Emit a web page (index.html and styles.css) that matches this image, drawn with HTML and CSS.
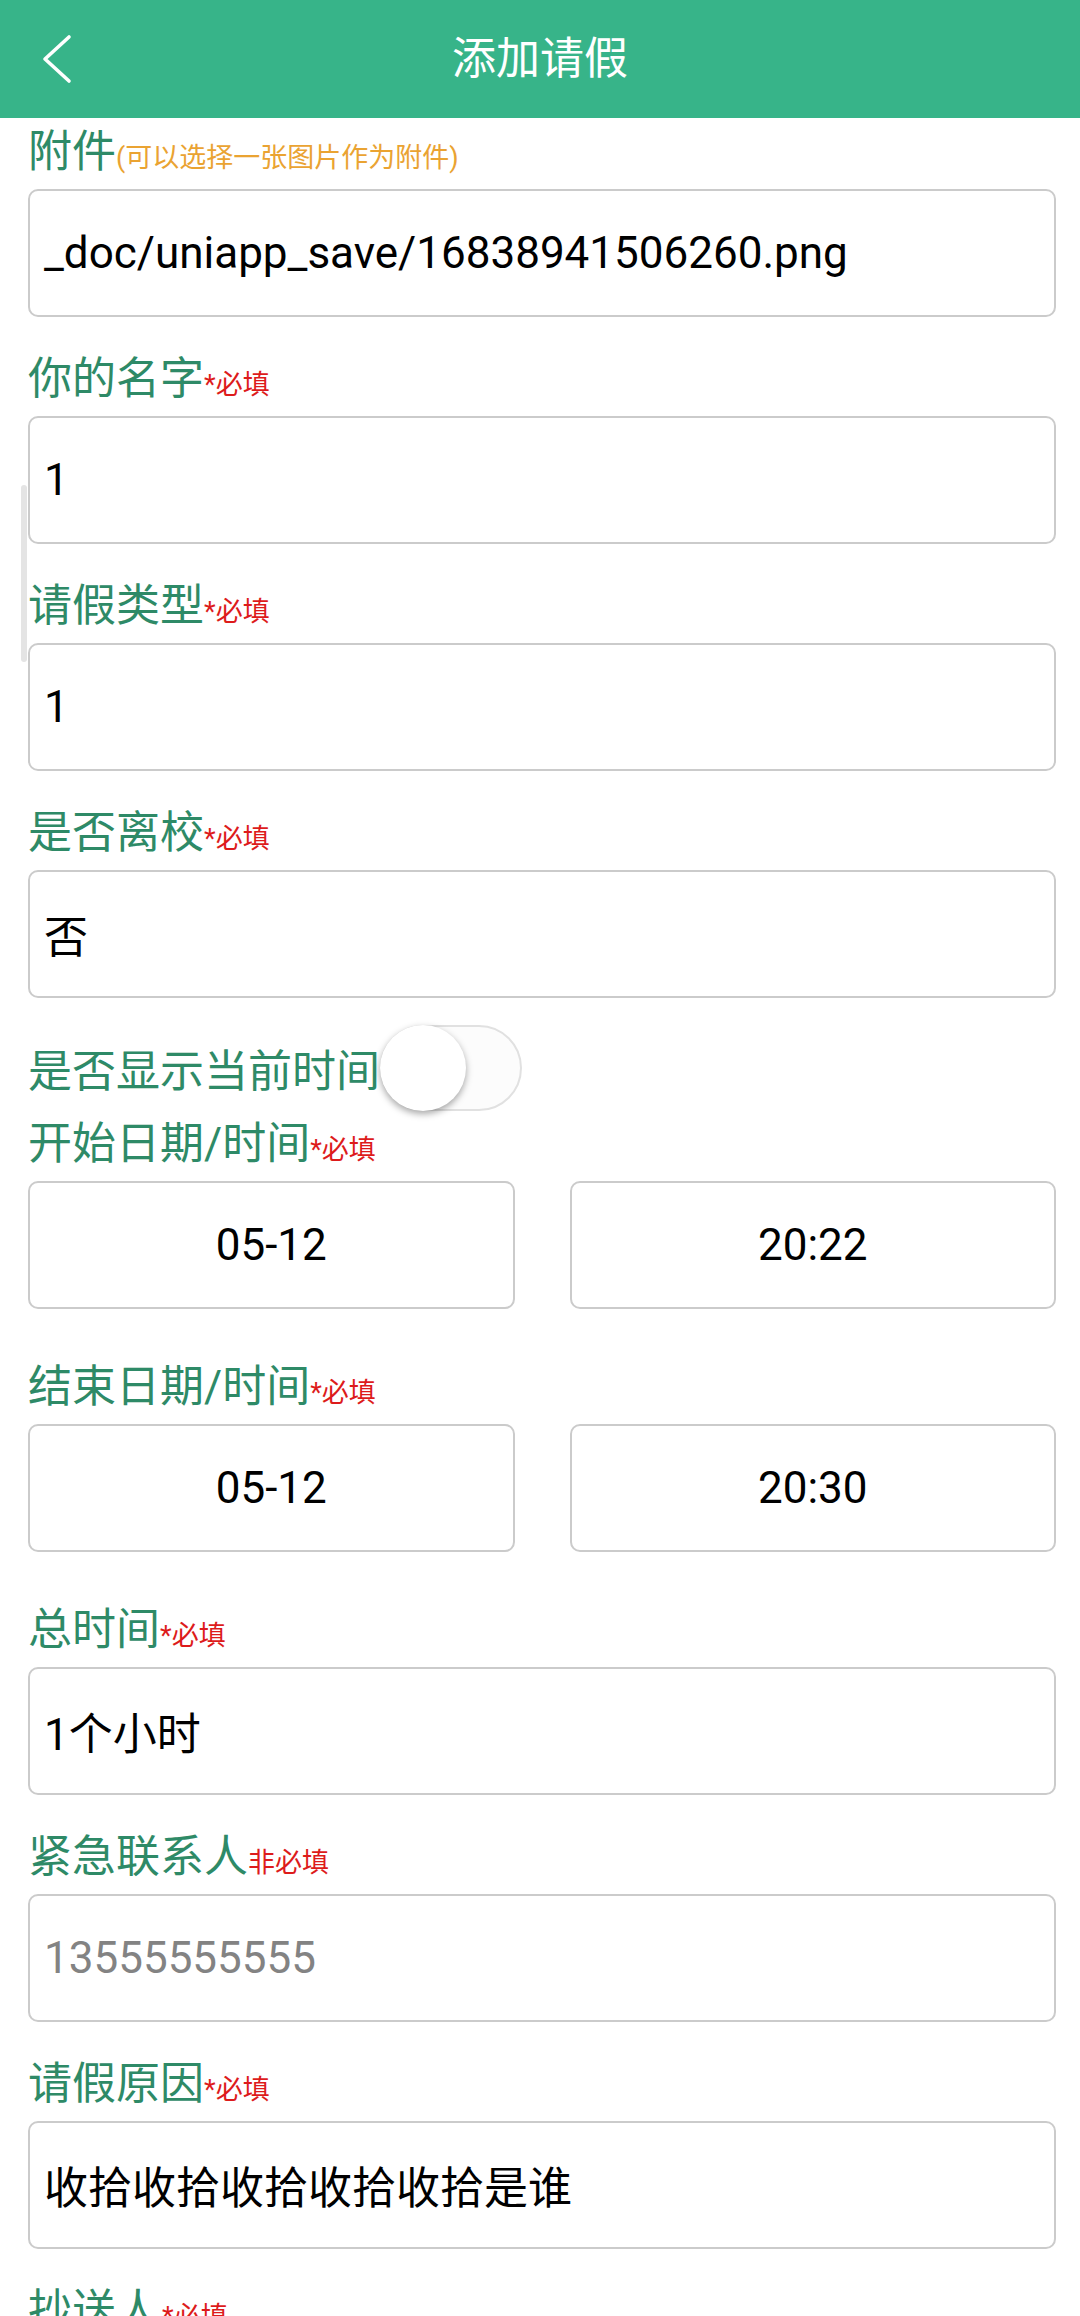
FILE: index.html
```html
<!DOCTYPE html>
<html lang="zh-CN">
<head>
<meta charset="utf-8">
<title>添加请假</title>
<link rel="stylesheet" href="styles.css">
</head>
<body>
<header class="navbar">
  <div class="nav-left">
    <svg class="back" width="32" height="50" viewBox="0 0 32 50"><polyline points="27,3 3,25 27,47" fill="none" stroke="#fff" stroke-width="3.6" stroke-linecap="round" stroke-linejoin="round"/></svg>
  </div>
  <div class="nav-title">添加请假</div>
  <div class="nav-right"></div>
</header>
<div class="scroll-ind"></div>
<main class="form">
  <div class="field">
    <div class="label">附件<span class="tip">(可以选择一张图片作为附件)</span></div>
    <div class="box">_doc/uniapp_save/16838941506260.png</div>
  </div>
  <div class="field">
    <div class="label">你的名字<span class="req">*必填</span></div>
    <div class="box">1</div>
  </div>
  <div class="field">
    <div class="label">请假类型<span class="req">*必填</span></div>
    <div class="box">1</div>
  </div>
  <div class="field field-tight">
    <div class="label">是否离校<span class="req">*必填</span></div>
    <div class="box">否</div>
  </div>
  <div class="switch-row">
    <span class="label-text">是否显示当前时间</span>
    <span class="switch"><span class="knob"></span></span>
  </div>
  <div class="field field-wide">
    <div class="label">开始日期/时间<span class="req">*必填</span></div>
    <div class="pair">
      <div class="box center">05-12</div>
      <div class="box center">20:22</div>
    </div>
  </div>
  <div class="field field-wide">
    <div class="label">结束日期/时间<span class="req">*必填</span></div>
    <div class="pair">
      <div class="box center">05-12</div>
      <div class="box center">20:30</div>
    </div>
  </div>
  <div class="field">
    <div class="label">总时间<span class="req">*必填</span></div>
    <div class="box">1个小时</div>
  </div>
  <div class="field">
    <div class="label">紧急联系人<span class="req">非必填</span></div>
    <div class="box placeholder">13555555555</div>
  </div>
  <div class="field">
    <div class="label">请假原因<span class="req">*必填</span></div>
    <div class="box">收拾收拾收拾收拾收拾是谁</div>
  </div>
  <div class="field">
    <div class="label">抄送人<span class="req req-gap">*必填</span></div>
    <div class="box"></div>
  </div>
</main>
</body>
</html>
```
FILE: styles.css
```css
html {
  overflow: hidden;
}
body {
  margin: 0;
  background: #ffffff;
  font-family: Roboto, "Noto Sans CJK SC", sans-serif;
  color: #000;
  position: relative;
}
.navbar {
  height: 118px;
  background: #37b489;
  display: grid;
  grid-template-columns: 1fr auto 1fr;
  align-items: center;
}
.nav-left {
  padding-left: 42px;
  display: flex;
  align-items: center;
}
.back {
  display: block;
}
.nav-title {
  color: #fff;
  font-size: 44px;
  line-height: 60px;
}
.scroll-ind {
  position: absolute;
  left: 21px;
  top: 485px;
  width: 6px;
  height: 177px;
  border-radius: 3px;
  background: #e4e4e4;
}
.form {
  padding: 4px 24px 0 28px;
}
.field {
  margin-bottom: 32px;
}
.field-tight {
  margin-bottom: 27px;
}
.field-wide {
  margin-bottom: 48px;
}
.label {
  font-size: 44px;
  line-height: 61px;
  height: 61px;
  color: #2e8a67;
  margin-bottom: 6px;
  white-space: nowrap;
}
.tip {
  font-size: 27px;
  line-height: 1;
  color: #eaa332;
}
.req {
  font-size: 27px;
  line-height: 1;
  color: #dd1b1b;
}
.req-gap {
  margin-left: 2px;
}
.box {
  height: 128px;
  box-sizing: border-box;
  border: 2px solid #cbcbcb;
  border-radius: 10px;
  padding: 0 14px;
  display: flex;
  align-items: center;
  font-size: 44px;
  white-space: nowrap;
  overflow: hidden;
}
.box.center {
  justify-content: center;
}
.box.placeholder {
  color: #838383;
}
.pair {
  display: grid;
  grid-template-columns: 1fr 1fr;
  column-gap: 55px;
}
.switch-row {
  display: flex;
  align-items: center;
  height: 86px;
  margin-bottom: 3px;
}
.label-text {
  font-size: 44px;
  color: #2e8a67;
}
.switch {
  width: 142px;
  height: 86px;
  box-sizing: border-box;
  border: 2px solid #e1e1e1;
  border-radius: 43px;
  background: #fcfcfc;
  display: flex;
  align-items: center;
}
.knob {
  width: 86px;
  height: 86px;
  margin-left: -2px;
  border-radius: 50%;
  background: #fff;
  box-shadow: 0 3px 7px rgba(0, 0, 0, 0.35);
}
```
